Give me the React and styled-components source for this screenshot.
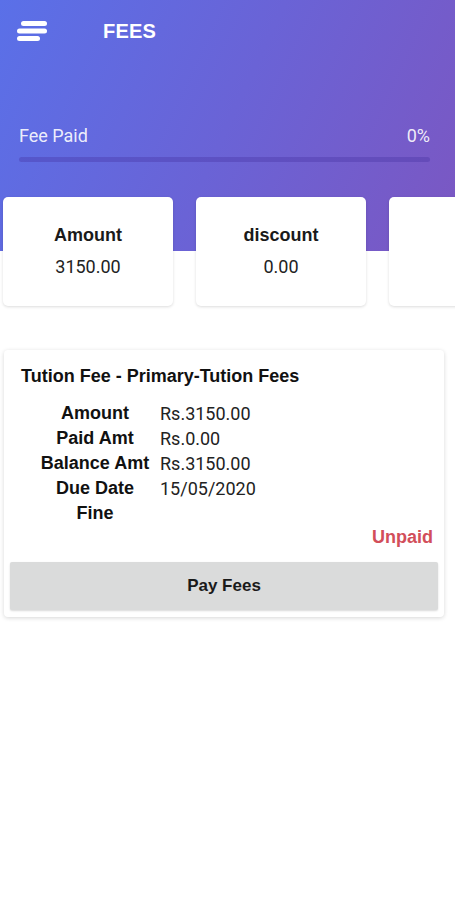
import styled, { createGlobalStyle } from "styled-components"

const GlobalStyle = createGlobalStyle`
    * { box-sizing: border-box; }
    body {
        margin: 0;
        background: #ffffff;
        font-family: Roboto, "Liberation Sans", Arial, sans-serif;
    }
`

// third card is mostly off screen, its text falls outside the view
const summary = [
    { title: "Amount", value: "3150.00" },
    { title: "discount", value: "0.00" },
    { title: "", value: "" },
]

const details = [
    { label: "Amount", value: "Rs.3150.00" },
    { label: "Paid Amt", value: "Rs.0.00" },
    { label: "Balance Amt", value: "Rs.3150.00" },
    { label: "Due Date", value: "15/05/2020" },
    { label: "Fine", value: "" },
]

function MenuIcon() {
    return (
        <svg width="32" height="22" viewBox="0 0 32 22">
            <rect x="5" y="1" width="26" height="5" rx="2.5" fill="#fff" />
            <rect x="1" y="8.5" width="30" height="5" rx="2.5" fill="#fff" />
            <rect x="1" y="16" width="23" height="5" rx="2.5" fill="#fff" />
        </svg>
    )
}

export default function App() {
    return (
        <Page>
            <GlobalStyle />
            <Header>
                <TopBar>
                    <MenuButton><MenuIcon /></MenuButton>
                    <Title>FEES</Title>
                </TopBar>
                <ProgressLabel>
                    <span>Fee Paid</span>
                    <span>0%</span>
                </ProgressLabel>
                <ProgressTrack />
            </Header>

            <SummaryRow>
                {summary.map((item, i) => (
                    <SummaryCard key={i}>
                        <h3>{item.title}</h3>
                        <p>{item.value}</p>
                    </SummaryCard>
                ))}
            </SummaryRow>

            <FeeCard>
                <FeeTitle>Tution Fee - Primary-Tution Fees</FeeTitle>
                <DetailGrid>
                    {details.map((d) => (
                        <DetailRow key={d.label}>
                            <DetailLabel>{d.label}</DetailLabel>
                            <DetailValue>{d.value}</DetailValue>
                        </DetailRow>
                    ))}
                </DetailGrid>
                <Status>Unpaid</Status>
                <PayButton>Pay Fees</PayButton>
            </FeeCard>
        </Page>
    )
}

const Page = styled.div`
    width: 455px;
    min-height: 900px;
    background: #ffffff;
    overflow: hidden;
`

const Header = styled.div`
    height: 251px;
    padding: 18px 25px 0 19px;
    background: linear-gradient(115deg, #5a70e8 0%, #6a63d6 50%, #7b57c2 100%);
`

const TopBar = styled.div`
    display: flex;
    align-items: center;
    height: 26px;
`

const MenuButton = styled.div`
    display: flex;
    margin-left: -3px;
    width: 87px;
`

const Title = styled.h1`
    margin: 0;
    color: #ffffff;
    font-family: "Liberation Sans", Arial, sans-serif;
    font-weight: 700;
    font-size: 20px;
    letter-spacing: 0.2px;
`

const ProgressLabel = styled.div`
    display: flex;
    justify-content: space-between;
    margin-top: 81px;
    color: rgba(255, 255, 255, 0.9);
    font-size: 18px;
    line-height: 22px;
`

const ProgressTrack = styled.div`
    height: 5px;
    margin-top: 10px;
    border-radius: 3px;
    background: rgba(70, 50, 160, 0.35);
`

const SummaryRow = styled.div`
    display: flex;
    gap: 23px;
    margin-top: -54px;
    padding: 0 3px;
`

const SummaryCard = styled.div`
    flex: 0 0 170px;
    height: 109px;
    background: #ffffff;
    border-radius: 5px;
    box-shadow: 0 1px 3px rgba(0, 0, 0, 0.14);
    display: flex;
    flex-direction: column;
    align-items: center;
    padding-top: 28px;

    h3 {
        margin: 0;
        height: 21px;
        font-family: "Liberation Sans", Arial, sans-serif;
        font-size: 18px;
        line-height: 21px;
        font-weight: 700;
        color: #1a1a1a;
    }
    p {
        margin: 10px 0 0;
        font-size: 18px;
        line-height: 21px;
        color: #222;
    }
`

const FeeCard = styled.div`
    margin: 44px 11px 0 4px;
    padding: 16px 6px 7px 6px;
    background: #ffffff;
    border-radius: 4px;
    box-shadow: 0 1px 4px rgba(0, 0, 0, 0.16);
`

const FeeTitle = styled.h2`
    margin: 0 0 14px 11px;
    font-family: "Liberation Sans", Arial, sans-serif;
    font-size: 18px;
    line-height: 21px;
    font-weight: 700;
    color: #111;
`

const DetailGrid = styled.div`
    display: flex;
    flex-direction: column;
    padding-left: 20px;
`

const DetailRow = styled.div`
    display: grid;
    grid-template-columns: 130px 1fr;
    line-height: 25px;
`

const DetailLabel = styled.span`
    text-align: center;
    font-family: "Liberation Sans", Arial, sans-serif;
    font-weight: 700;
    font-size: 18px;
    color: #111;
`

const DetailValue = styled.span`
    font-size: 18px;
    color: #222;
`

const Status = styled.div`
    text-align: right;
    padding-right: 5px;
    margin-top: -1px;
    font-family: "Liberation Sans", Arial, sans-serif;
    font-weight: 700;
    font-size: 18px;
    line-height: 24px;
    color: #d24e5a;
`

const PayButton = styled.button`
    display: block;
    width: 100%;
    height: 48px;
    margin-top: 13px;
    border: none;
    border-radius: 2px;
    background: #dadbdb;
    font-family: "Liberation Sans", Arial, sans-serif;
    font-weight: 700;
    font-size: 17px;
    color: #1a1a1a;
    box-shadow: 0 1px 2px rgba(0, 0, 0, 0.15);
`
